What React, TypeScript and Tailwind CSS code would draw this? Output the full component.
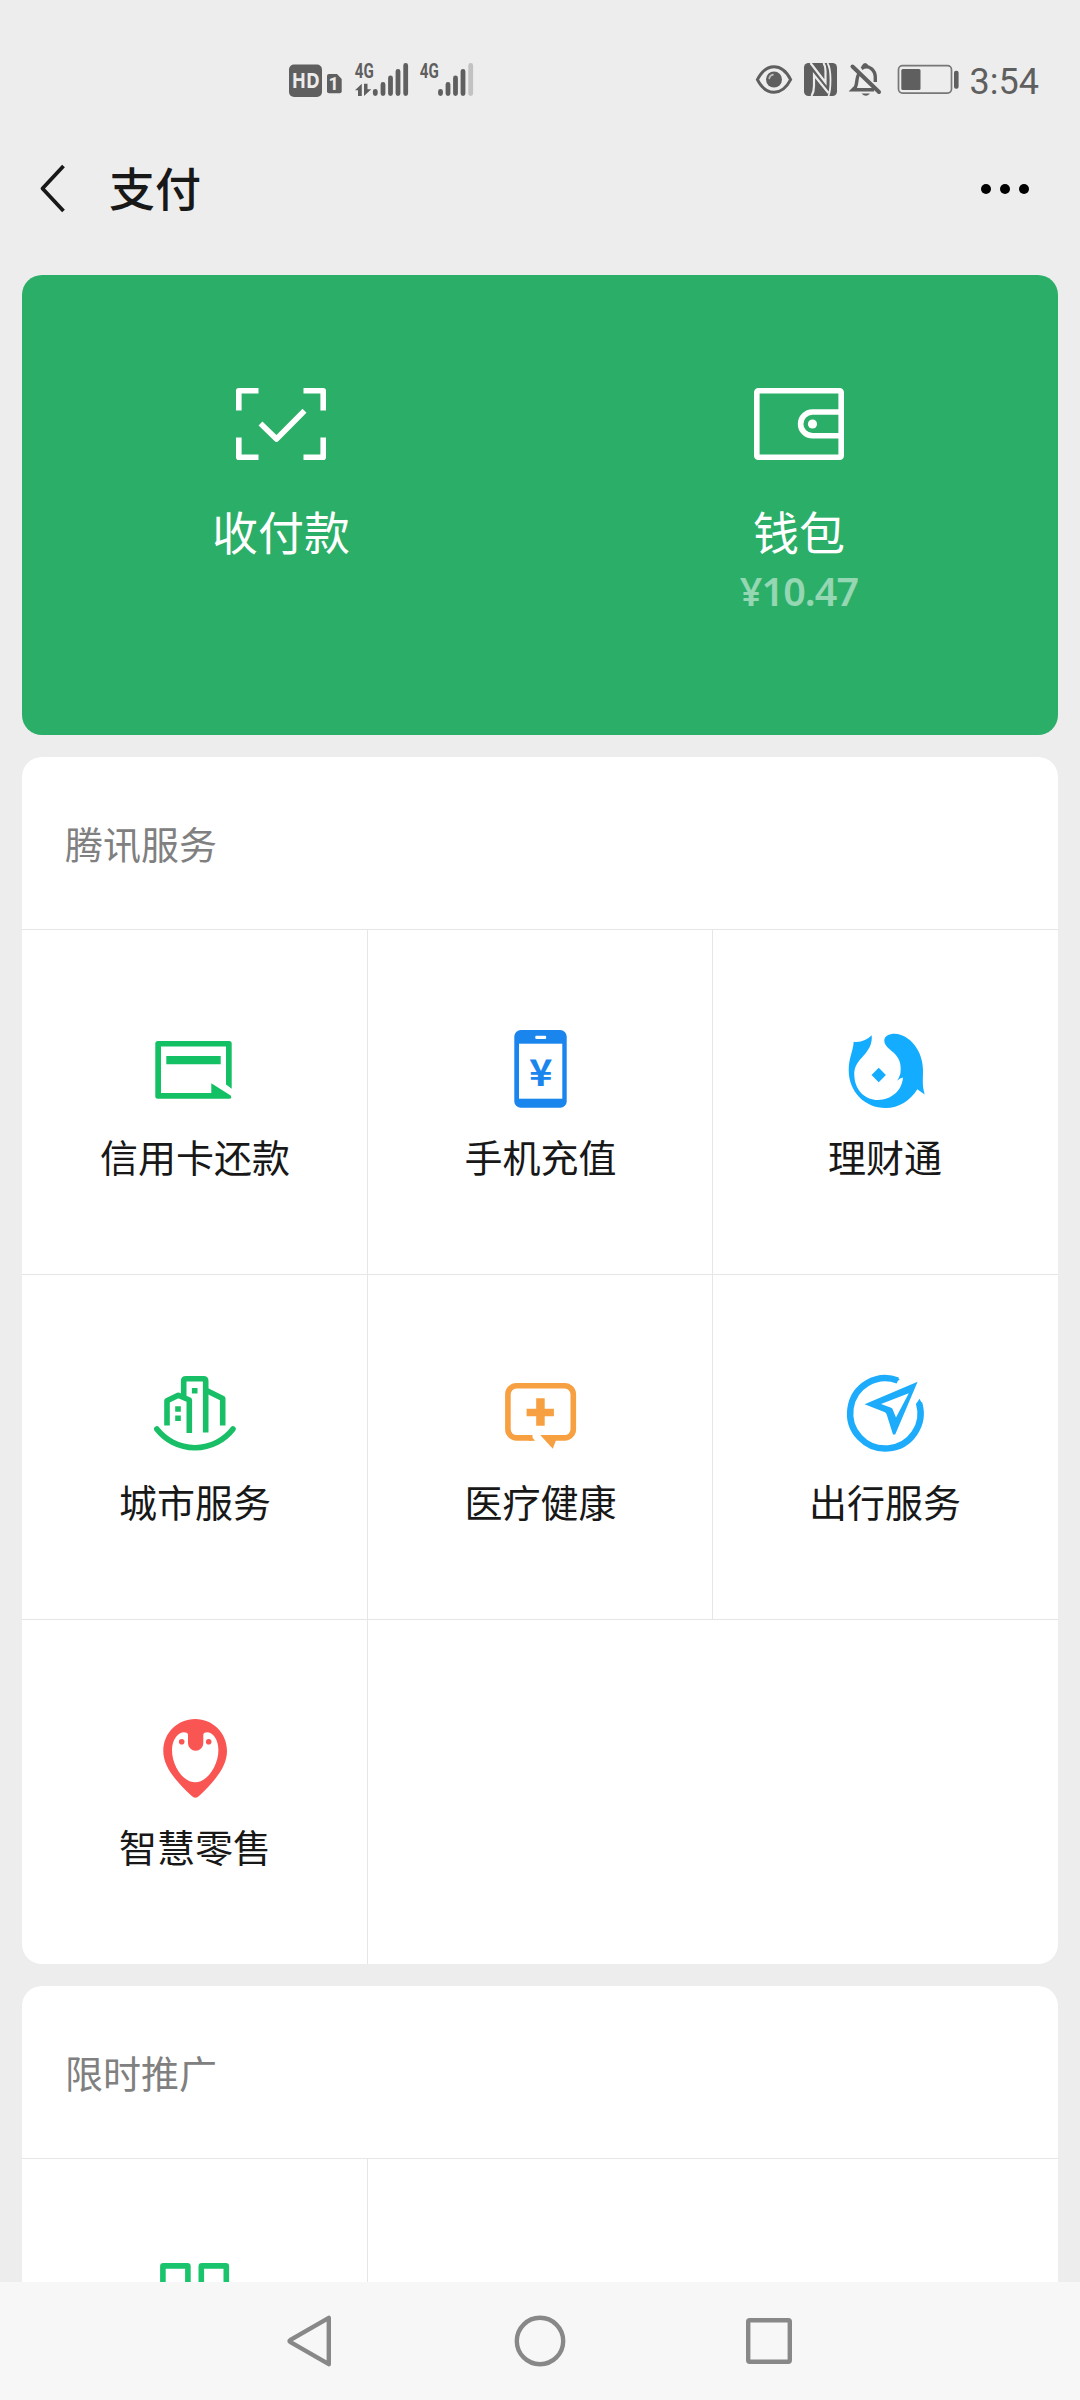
import type { ReactNode } from 'react';

interface IconProps {
  children: ReactNode;
}

interface Service {
  name: string;
  icon: ReactNode;
}

const ServiceIcon = ({ children }: IconProps) => (
  <svg className="w-[90px] h-[90px]" viewBox="0 0 90 90" fill="none">
    {children}
  </svg>
);

const CardIcon = () => (
  <ServiceIcon>
    <path
      fill="#14c064"
      d="M7.8 17H79.2a2.5 2.5 0 0 1 2.5 2.5V64.7L76 60.4V22.6H11V69H61.3V59.3L80.7 71.4Q82.4 74.7 79.2 74.7H7.8a2.5 2.5 0 0 1-2.5-2.5V19.5A2.5 2.5 0 0 1 7.8 17Z"
    />
    <path fill="#14c064" d="M16.3 32H70.7V40.3H16.3Z" />
  </ServiceIcon>
);

const PhoneIcon = () => (
  <ServiceIcon>
    <rect x="19.3" y="6" width="52.4" height="77.7" rx="6.5" fill="#1b85ee" />
    <rect x="24" y="19.7" width="43.3" height="55" fill="#fff" />
    <rect x="40.3" y="11.8" width="10.8" height="3.2" rx="1" fill="#fff" />
    <text
      x="45.7"
      y="62"
      textAnchor="middle"
      fill="#1b85ee"
      fontFamily="Noto Sans CJK SC, sans-serif"
      fontWeight="700"
      fontSize="37"
      textLength="23.5"
      lengthAdjust="spacingAndGlyphs"
    >
      ¥
    </text>
  </ServiceIcon>
);

const FishIcon = () => (
  <ServiceIcon>
    <path
      fill="#13acff"
      d="M13.7 17.7Q24 19 31.7 11.3C32.5 20 29 26 21.3 34.3C16 40 14 45 14.3 51C14.6 66 25 76 38 76C51 76 62 67 63 53.6Q60 54 57 56.7Q59 54 60.3 50C61.5 42 60.5 35 53.5 28.5C48 24 44.3 21 44.3 16.5C44.3 12 49 9.7 54.7 9.7C70 10.5 83 27 83 46C83 58 82 60 84.7 70.5L77.3 65.3C70 77 59 84 45.7 84C25 84 8.7 68 8.7 46C8.7 34 13 28 13.7 17.7Z"
    />
    <path fill="#13acff" d="M38.7 43.8L45.9 51L38.7 58.2L31.5 51Z" />
  </ServiceIcon>
);

const CityIcon = () => (
  <ServiceIcon>
    <g stroke="#18bf66" strokeWidth="5.6" strokeLinejoin="round">
      <path d="M17 56.5V31.8L28.3 26.2L39.3 31V64" />
      <path d="M33.7 28V12Q33.7 9.8 36 9.8H53.5Q55.7 9.8 55.7 12V63.5" />
      <path d="M56.5 21.5L72.7 29.5V56.5" />
      <path strokeLinecap="round" d="M6.8 60A48.2 48.2 0 0 0 83 60" />
    </g>
    <path
      fill="#18bf66"
      d="M41.9 18.9h5.6v5.6h-5.6ZM25.2 37.2h5.6v5.6h-5.6ZM25.2 46.5h5.6v5.6h-5.6Z"
    />
  </ServiceIcon>
);

const MedicalIcon = () => (
  <ServiceIcon>
    <path
      stroke="#f7a042"
      strokeWidth="5.6"
      d="M37.5 68.9H21.5A8.6 8.6 0 0 1 12.9 60.3V25.4A8.6 8.6 0 0 1 21.5 16.8H69.7A8.6 8.6 0 0 1 78.3 25.4V60.3A8.6 8.6 0 0 1 69.7 68.9H56"
    />
    <path
      fill="#f7a042"
      d="M34.5 66.1L40.3 71.7H34ZM45.2 66.1H60.8V71.7L57.8 79.7ZM41.2 29.3h8.5v10.4h9.2v7.6h-9.2v9.4h-8.5v-9.4h-9.6v-7.6h9.6Z"
    />
  </ServiceIcon>
);

const TravelIcon = () => (
  <ServiceIcon>
    <path
      stroke="#1cacfb"
      strokeWidth="6.4"
      d="M57.8 11.4A35.2 35.2 0 1 0 79 34"
    />
    <path fill="#1cacfb" d="M55 8L59.8 10.3L55.5 14ZM79.6 29.8L82.6 36L76 35Z" />
    <path
      fill="#1cacfb"
      fillRule="evenodd"
      d="M77.6 12.8L24.6 35.2L45 43.2L46.5 45L53 65.5H55.2ZM68.8 24.3L56 48.5L52.3 39.6L50.5 38.4L41 35Z"
    />
  </ServiceIcon>
);

const RetailIcon = () => (
  <ServiceIcon>
    <path
      fill="#f95553"
      fillRule="evenodd"
      d="M45.2 5C62.8 5 77 19 77 37C77 52 66 66 49.3 81.8Q45.3 85.5 41.5 81.8C24.5 66 13.3 52 13.3 37C13.3 19 27.5 5 45.2 5ZM38 20.5Q37.5 18.3 33.5 18.3C27 18.8 22 27 22 36C22 52 33 68.3 45.3 68.3C57 68.3 68.4 52 68.4 36C68.4 27 64 18.8 57.5 18.3Q53.8 18.3 53.3 20.5V29.2A7.65 7.65 0 0 1 38 29.2Z"
    />
    <circle cx="31.7" cy="27.7" r="2.8" fill="#f95553" />
    <circle cx="58.7" cy="27.7" r="2.8" fill="#f95553" />
  </ServiceIcon>
);

const BlocksIcon = () => (
  <ServiceIcon>
    <g stroke="#1ac46c" strokeWidth="5.6">
      <rect x="12.9" y="12.9" width="25" height="25" rx="0.5" />
      <rect x="51.3" y="12.9" width="25" height="25" rx="0.5" />
      <rect x="12.9" y="51.3" width="25" height="25" rx="0.5" />
      <rect x="51.3" y="51.3" width="25" height="25" rx="0.5" />
    </g>
  </ServiceIcon>
);

const tencentServices: Service[] = [
  { name: '信用卡还款', icon: <CardIcon /> },
  { name: '手机充值', icon: <PhoneIcon /> },
  { name: '理财通', icon: <FishIcon /> },
  { name: '城市服务', icon: <CityIcon /> },
  { name: '医疗健康', icon: <MedicalIcon /> },
  { name: '出行服务', icon: <TravelIcon /> },
  { name: '智慧零售', icon: <RetailIcon /> },
];

const promotions: Service[] = [{ name: '', icon: <BlocksIcon /> }];

const NetworkStatus = () => (
  <svg
    className="w-[190px] h-[40px]"
    viewBox="286 60 190 40"
    fill="#5f5f5f"
    fontFamily="Roboto, sans-serif"
  >
    <rect x="289" y="64.5" width="33" height="32.5" rx="5" />
    <text
      x="305.7"
      y="88"
      textAnchor="middle"
      fill="#ececec"
      fontFamily="Open Sans, sans-serif"
      fontWeight="700"
      fontSize="21"
      textLength="28"
      lengthAdjust="spacingAndGlyphs"
    >
      HD
    </text>
    <path d="M329 74H337L341.7 79V91.3Q341.7 93.3 339.7 93.3H329Q327 93.3 327 91.3V76Q327 74 329 74Z" />
    <text
      x="333.6"
      y="90"
      textAnchor="middle"
      fill="#ececec"
      fontWeight="700"
      fontSize="18"
    >
      1
    </text>
    {[354.8, 419.8].map((x) => (
      <text
        key={x}
        x={x}
        y="77.8"
        fontWeight="700"
        fontSize="21"
        textLength="19"
        lengthAdjust="spacingAndGlyphs"
      >
        4G
      </text>
    ))}
    <path d="M355 90.3L361.8 83.8V96H358V90.3ZM364 83.8H367.5V89.3H371.3L364 96Z" />
    <g stroke="#5f5f5f" strokeWidth="4.8" strokeLinecap="round">
      <path d="M375.3 91.3V93.5M383 84.5V93.5M390.5 78V93.5M398 71.3V93.5M405.7 65.4V93.5" />
      <path d="M440.5 91.3V93.5M448 84.5V93.5M455.5 78V93.5M463 71.3V93.5" />
      <path stroke="#c2c2c2" d="M470.7 65.4V93.5" />
    </g>
  </svg>
);

const DeviceStatus = () => (
  <svg className="w-[208px] h-[40px]" viewBox="754 60 208 40" fill="none">
    <path
      stroke="#5f5f5f"
      strokeWidth="3"
      d="M757.4 79.6C766 62.5 782 62.5 790.6 79.6C782 96.4 766 96.4 757.4 79.6Z"
    />
    <circle cx="774" cy="79.5" r="8" fill="#5f5f5f" />
    <path
      stroke="#bdbdbd"
      strokeWidth="1.6"
      strokeLinecap="round"
      d="M769.2 78.5A5 5 0 0 1 773 74.6"
    />
    <rect x="804" y="63" width="33" height="33" rx="4.5" fill="#5f5f5f" />
    <g stroke="#ececec" strokeWidth="2.2">
      <path d="M811.5 96Q814 92 814 86V75L828.5 93" />
      <path d="M810.5 63L825.5 82.5V71Q825.5 66 823.5 63" />
      <path strokeWidth="1.8" d="M827.5 63Q830.5 68 830.5 79.5T828.5 96" />
    </g>
    <g stroke="#5f5f5f" strokeWidth="3.4">
      <path d="M859.5 73C856 77 857.5 83 855.5 87L852.7 89.8H874" />
      <path d="M861.5 68.5C869 64 875.5 70 875.3 78V82" />
      <path strokeWidth="4" strokeLinecap="round" d="M852.5 66.5L879 92" />
      <path strokeWidth="2.8" strokeLinecap="round" d="M863 66.5Q865 62.5 867.5 66.5" />
    </g>
    <path fill="#5f5f5f" d="M861.5 93.5H870Q866 98 861.5 93.5Z" />
    <rect
      x="898.5"
      y="65.7"
      width="53"
      height="27.4"
      rx="4"
      stroke="#777"
      strokeWidth="1.7"
    />
    <rect x="901.3" y="69" width="19.2" height="21" rx="1.5" fill="#5f5f5f" />
    <rect x="954" y="70.7" width="4.6" height="18" rx="2" fill="#5f5f5f" />
  </svg>
);

const StatusBar = () => (
  <div className="flex items-center justify-between h-[160px] pl-[286px] pr-[41px]">
    <NetworkStatus />
    <div className="flex items-center gap-[8px] text-[#5f5f5f]">
      <DeviceStatus />
      <span className="font-[Roboto,sans-serif] text-[36px] leading-[40px] pt-[4px]">
        3:54
      </span>
    </div>
  </div>
);

const TitleBar = () => (
  <header className="flex items-center h-[57px] pl-[35px] pr-[51px]">
    <svg className="w-[34px] h-[52px]" viewBox="0 0 34 52" fill="none">
      <path
        stroke="#181818"
        strokeWidth="3.8"
        strokeLinejoin="round"
        d="M28.5 3L7.5 25.5L28.5 48"
      />
    </svg>
    <h1 className="ml-[40px] mb-[4px] text-[46px] leading-[53px] font-medium">
      支付
    </h1>
    <div className="flex gap-[9px] ml-auto">
      <span className="w-[10px] h-[10px] rounded-full bg-black" />
      <span className="w-[10px] h-[10px] rounded-full bg-black" />
      <span className="w-[10px] h-[10px] rounded-full bg-black" />
    </div>
  </header>
);

const PayPanel = () => (
  <section className="flex shrink-0 h-[460px] pt-[107px] rounded-[20px] bg-[#2bae67] text-white">
    <div className="flex flex-col items-center w-1/2">
      <svg className="w-[102px] h-[84px]" viewBox="0 0 102 84" fill="none">
        <g stroke="#fff" strokeWidth="5.6" strokeLinejoin="round">
          <path d="M8.8 28.5V8.8H28.5M73.5 8.8H93.2V28.5M93.2 55.5V75.2H73.5M28.5 75.2H8.8V55.5" />
          <path d="M30.5 41.5L46.5 57L74.5 28.8" />
        </g>
      </svg>
      <span className="mt-[32px] text-[46px] leading-[64px]">收付款</span>
    </div>
    <div className="flex flex-col items-center w-1/2">
      <svg className="w-[102px] h-[84px]" viewBox="0 0 102 84" fill="none">
        <g stroke="#fff" strokeWidth="5.6">
          <rect x="8.8" y="8.8" width="84.4" height="66.4" rx="1.5" />
          <path d="M93 30H64.5A11.9 11.9 0 0 0 64.5 53.8H93" />
        </g>
        <circle cx="64.5" cy="42" r="4.6" fill="#fff" />
      </svg>
      <span className="mt-[32px] text-[46px] leading-[64px]">钱包</span>
      <span className="mt-[3px] font-['Noto_Sans',sans-serif] font-semibold text-[39.5px] leading-[52px] tracking-[-0.9px] text-white/50">
        ¥10.47
      </span>
    </div>
  </section>
);

interface ServiceCardProps {
  title: string;
  services: Service[];
}

const ServiceCard = ({ title, services }: ServiceCardProps) => (
  <section className="shrink-0 rounded-[20px] bg-white overflow-hidden">
    <h2 className="flex items-center h-[172px] px-[43px] pb-[2px] text-[38px] text-[#808080]">
      {title}
    </h2>
    <div className="grid grid-cols-[345px_345px_346px]">
      {services.map((service, index) => (
        <div
          key={index}
          className={`flex flex-col items-center h-[345px] pt-[94px] border-t border-[#e6e6e6] ${
            index % 3 !== 0 ? 'border-l' : ''
          } ${index % 3 === 2 ? 'pr-[2px]' : ''}`}
        >
          {service.icon}
          <span className="mt-[16px] pl-px text-[38px] leading-[52px]">
            {service.name}
          </span>
        </div>
      ))}
      {services.length % 3 === 1 && (
        <div className="col-span-2 border-t border-l border-[#e6e6e6]" />
      )}
    </div>
  </section>
);

const NavigationBar = () => (
  <nav className="flex items-center justify-center gap-[170px] shrink-0 h-[118px] bg-[#f7f7f7]">
    <svg className="w-[60px] h-[60px]" viewBox="0 0 60 60" fill="none">
      <path
        stroke="#888"
        strokeWidth="4.4"
        strokeLinejoin="round"
        d="M48.8 6.8V53.2L10.5 31.2Q8.5 30 10.5 28.8Z"
      />
    </svg>
    <svg className="w-[60px] h-[60px]" viewBox="0 0 60 60" fill="none">
      <circle cx="30" cy="30" r="23.2" stroke="#888" strokeWidth="4.4" />
    </svg>
    <svg className="w-[60px] h-[60px]" viewBox="0 0 60 60" fill="none">
      <rect
        x="8.2"
        y="9.2"
        width="41.6"
        height="41.6"
        rx="1.5"
        stroke="#888"
        strokeWidth="4.4"
      />
    </svg>
  </nav>
);

const App = () => {
  return (
    <div className="flex flex-col w-[1080px] h-[2400px] overflow-hidden bg-[#ededed] text-[#181818] font-['Noto_Sans_CJK_SC',sans-serif]">
      <StatusBar />
      <TitleBar />
      <main className="flex flex-col flex-1 gap-[22px] min-h-0 px-[22px] pt-[58px] overflow-hidden">
        <PayPanel />
        <ServiceCard title="腾讯服务" services={tencentServices} />
        <ServiceCard title="限时推广" services={promotions} />
      </main>
      <NavigationBar />
    </div>
  );
};

export default App;
